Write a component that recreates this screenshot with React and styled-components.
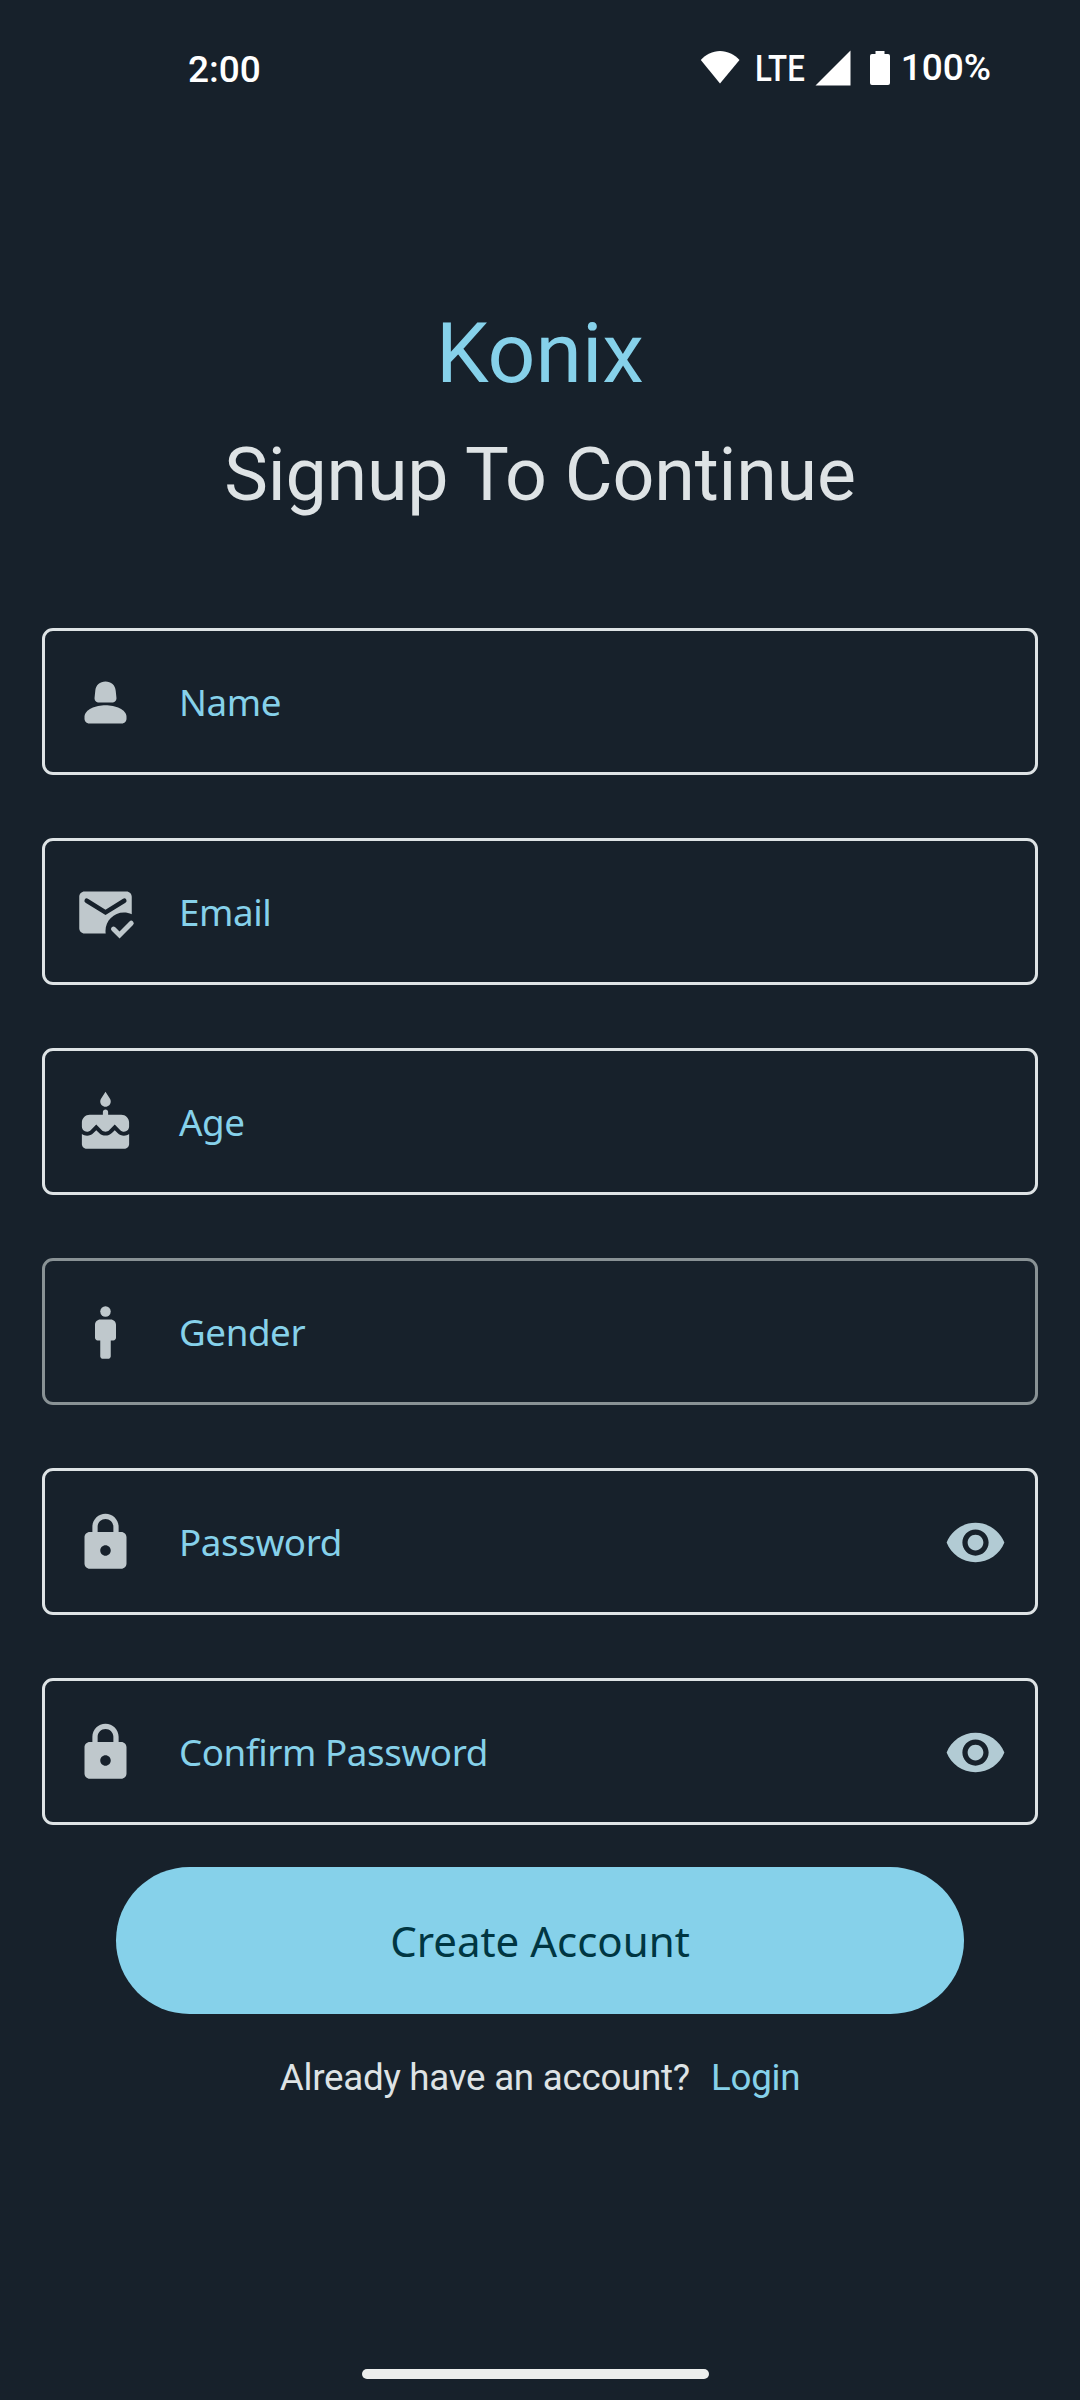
import React from "react";
import styled, { createGlobalStyle } from "styled-components";

const GlobalStyle = createGlobalStyle`
  * { box-sizing: border-box; }
  body { margin: 0; background: #17212b; }
`;

const Screen = styled.main`
  display: flex;
  flex-direction: column;
  align-items: center;
  width: 1080px;
  height: 2400px;
  overflow: hidden;
  background: #17212b;
  color: #dee3e5;
  font-family: Roboto, "Liberation Sans", sans-serif;
`;

const StatusBar = styled.header`
  display: flex;
  justify-content: space-between;
  align-items: flex-start;
  width: 100%;
  height: 136px;
  padding: 50px 89px 0 188px;
  color: #fff;
  font-weight: 500;
`;

const Clock = styled.time`
  margin-top: -1px;
  font-size: 37px;
  line-height: 42px;
`;

const StatusIcons = styled.div`
  display: flex;
  align-items: flex-start;
`;

const StatusGlyph = styled.svg`
  display: block;
  margin-right: ${(p) => p.$gap}px;
  fill: #fff;
`;

const StatusText = styled.span`
  margin-top: ${(p) => p.$top}px;
  font-size: 37px;
  line-height: 42px;
`;

const NetworkType = styled(StatusText)`
  width: 50px;
  margin-right: 10px;
  white-space: nowrap;
  transform: scaleX(0.845);
  transform-origin: left;
`;

const Brand = styled.h1`
  margin: 169px 0 0;
  color: #86d1ea;
  font-size: 84px;
  font-weight: 400;
  line-height: 98px;
`;

const Subtitle = styled.h2`
  margin: 23px 0 0;
  font-size: 73.5px;
  font-weight: 400;
  line-height: 98px;
  letter-spacing: -0.18px;
`;

const Form = styled.form`
  display: flex;
  flex-direction: column;
  gap: 63px;
  width: 996px;
  margin-top: 104px;
`;

const Field = styled.label`
  display: flex;
  align-items: center;
  height: 147px;
  padding: 2px 28px 0 29px;
  border: 3px solid ${(p) => (p.$muted ? "#899295" : "#dee3e5")};
  border-radius: 11px;
`;

const FieldIcon = styled.svg`
  display: block;
  flex: none;
  width: 63px;
  height: 63px;
  fill: ${(p) => (p.$trailing ? "#b2cbd4" : "#bfc8cc")};
`;

const FieldLabel = styled.span`
  flex: 1;
  margin: 0 0 1px 42px;
  color: #86d1ea;
  font-family: "Noto Sans", sans-serif;
  font-size: 36.75px;
  line-height: 52px;
  letter-spacing: -0.42px;
`;

const SubmitButton = styled.button`
  width: 848px;
  height: 147px;
  margin: 42px 0 0;
  padding: 0;
  border: 0;
  border-radius: 74px;
  background: #86d1ea;
  color: #003642;
  font-family: "Noto Sans", sans-serif;
  font-size: 42px;
  line-height: 63px;
`;

const LoginRow = styled.p`
  display: flex;
  gap: 21px;
  margin: 38px 0 0;
  font-size: 36.75px;
  line-height: 52px;
  letter-spacing: -0.27px;
`;

const LoginLink = styled.a`
  color: #86d1ea;
`;

const HomeHandle = styled.div`
  width: 347px;
  height: 10.5px;
  margin: auto 9px 21px 0;
  border-radius: 6px;
  background: #eceeed;
`;

const PersonIcon = () => (
  <FieldIcon viewBox="0 0 24 24">
    <path d="M12 4c2.150 0 3.700 1.350 3.900 3.600l.27 2.600c.1 1-.6 1.800-1.600 1.800H9.430c-1 0-1.700-.8-1.600-1.800l.27-2.600C8.300 5.350 9.850 4 12 4z" />
    <path d="M12 13c3.700 0 8 1.600 8 4.400v.8c0 1-.8 1.800-1.800 1.800H5.800c-1 0-1.800-.8-1.800-1.800v-.8C4 14.600 8.300 13 12 13z" />
  </FieldIcon>
);

const MailIcon = () => (
  <FieldIcon viewBox="0 0 24 24">
    <path d="M12 19c0-3.870 3.130-7 7-7 1.080 0 2.090.25 3 .68V6c0-1.100-.9-2-2-2H4c-1.100 0-2 .9-2 2v12c0 1.100.9 2 2 2h8.080c-.05-.33-.08-.66-.08-1z" />
    <path d="M4.850 7.500L12 11.950l7.150-4.450" fill="none" stroke="#17212b" strokeWidth="1.750" strokeLinecap="round" />
    <path d="M15.050 18.300l2.300 2.250 4.450-4.450" fill="none" stroke="#bfc8cc" strokeWidth="1.900" strokeLinecap="round" />
  </FieldIcon>
);

const CakeIcon = () => (
  <FieldIcon viewBox="0 0 24 24">
    <path d="M12 6c1.110 0 2-.9 2-2 0-.38-.1-.73-.29-1.030L12 .3l-1.710 2.670c-.19.3-.29.65-.29 1.030 0 1.100.9 2 2 2zm4.600 9.990l-1.070-1.070-1.080 1.070c-1.300 1.300-3.580 1.310-4.890 0l-1.070-1.070-1.090 1.070C6.750 16.640 5.880 17 4.960 17c-.73 0-1.400-.23-1.960-.61V20.200c0 1 .8 1.800 1.800 1.800h14.400c1 0 1.800-.8 1.800-1.800v-3.810c-.56.38-1.230.61-1.960.61-.92 0-1.790-.36-2.440-1.010zM18 9h-5V8c0-.55-.45-1-1-1s-1 .45-1 1v1H6c-1.660 0-3 1.340-3 3v1.540c0 1.080.88 1.960 1.960 1.960.52 0 1.020-.2 1.380-.57l2.140-2.130 2.130 2.130c.74.74 2.030.74 2.770 0l2.140-2.130 2.130 2.130c.37.37.86.57 1.380.57 1.080 0 1.960-.88 1.960-1.960V12C21 10.340 19.660 9 18 9z" />
  </FieldIcon>
);

const ManIcon = () => (
  <FieldIcon viewBox="0 0 24 24">
    <circle cx="12" cy="4" r="2" />
    <path d="M14 7h-4c-1.100 0-2 .9-2 2v5c0 .55.45 1 1 1h1v6c0 .55.45 1 1 1h2c.55 0 1-.45 1-1v-6h1c.55 0 1-.45 1-1V9c0-1.100-.9-2-2-2z" />
  </FieldIcon>
);

const LockIcon = () => (
  <FieldIcon viewBox="0 0 24 24">
    <path d="M18 8h-1V6c0-2.760-2.240-5-5-5S7 3.240 7 6v2H6c-1.100 0-2 .9-2 2v10c0 1.100.9 2 2 2h12c1.100 0 2-.9 2-2V10c0-1.100-.9-2-2-2zm-6 9c-1.100 0-2-.9-2-2s.9-2 2-2 2 .9 2 2-.9 2-2 2zM9 8V6c0-1.660 1.340-3 3-3s3 1.340 3 3v2H9z" />
  </FieldIcon>
);

const EyeIcon = () => (
  <FieldIcon $trailing viewBox="0 0 24 24">
    <path d="M12 4.500C7 4.500 2.730 7.610 1 12c1.730 4.390 6 7.500 11 7.500s9.270-3.110 11-7.500c-1.730-4.390-6-7.500-11-7.500zM12 17c-2.760 0-5-2.240-5-5s2.240-5 5-5 5 2.240 5 5-2.240 5-5 5zm0-8c-1.660 0-3 1.340-3 3s1.340 3 3 3 3-1.340 3-3-1.340-3-3-3z" />
  </FieldIcon>
);

const fields = [
  { label: "Name", Icon: PersonIcon },
  { label: "Email", Icon: MailIcon },
  { label: "Age", Icon: CakeIcon },
  { label: "Gender", Icon: ManIcon, muted: true },
  { label: "Password", Icon: LockIcon, secret: true },
  { label: "Confirm Password", Icon: LockIcon, secret: true },
];

export default function App() {
  return (
    <Screen>
      <GlobalStyle />
      <StatusBar>
        <Clock>2:00</Clock>
        <StatusIcons>
          <StatusGlyph $gap={15} width="40" height="36" viewBox="0 0 40 36">
            <path d="M20 1C12.500 1 5.800 4.500.8 10L20 33.500 39.500 10C34.500 4.500 27.500 1 20 1z" />
          </StatusGlyph>
          <NetworkType $top={-2}>LTE</NetworkType>
          <StatusGlyph $gap={19} width="36" height="36" viewBox="0 0 36 36">
            <path d="M.5 35.500L35.500.5v35z" />
          </StatusGlyph>
          <StatusGlyph $gap={11} width="20" height="36" viewBox="0 0 20 36">
            <path d="M5.500 1h9v3H18a2 2 0 0 1 2 2v27a2 2 0 0 1-2 2H2a2 2 0 0 1-2-2V6a2 2 0 0 1 2-2h3.500z" />
          </StatusGlyph>
          <StatusText $top={-3}>100%</StatusText>
        </StatusIcons>
      </StatusBar>
      <Brand>Konix</Brand>
      <Subtitle>Signup To Continue</Subtitle>
      <Form>
        {fields.map(({ label, Icon, muted, secret }) => (
          <Field key={label} $muted={muted}>
            <Icon />
            <FieldLabel>{label}</FieldLabel>
            {secret && <EyeIcon />}
          </Field>
        ))}
      </Form>
      <SubmitButton type="button">Create Account</SubmitButton>
      <LoginRow>
        <span>Already have an account?</span>
        <LoginLink>Login</LoginLink>
      </LoginRow>
      <HomeHandle />
    </Screen>
  );
}
